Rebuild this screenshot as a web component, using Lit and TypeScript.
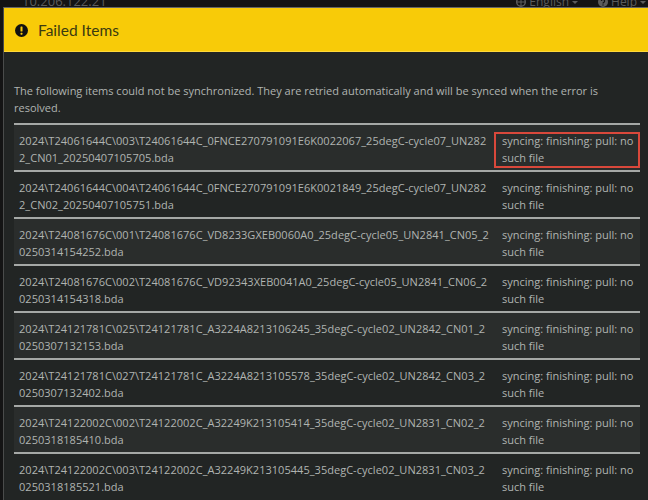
import { LitElement, html, css } from 'lit';
import { customElement } from 'lit/decorators.js';

const ITEMS = [
    '2024\\T24061644C\\003\\T24061644C_0FNCE270791091E6K0022067_25degC-cycle07_UN2822_CN01_20250407105705.bda',
    '2024\\T24061644C\\004\\T24061644C_0FNCE270791091E6K0021849_25degC-cycle07_UN2822_CN02_20250407105751.bda',
    '2024\\T24081676C\\001\\T24081676C_VD8233GXEB0060A0_25degC-cycle05_UN2841_CN05_20250314154252.bda',
    '2024\\T24081676C\\002\\T24081676C_VD92343XEB0041A0_25degC-cycle05_UN2841_CN06_20250314154318.bda',
    '2024\\T24121781C\\025\\T24121781C_A3224A8213106245_35degC-cycle02_UN2842_CN01_20250307132153.bda',
    '2024\\T24121781C\\027\\T24121781C_A3224A8213105578_35degC-cycle02_UN2842_CN03_20250307132402.bda',
    '2024\\T24122002C\\002\\T24122002C_A32249K213105414_35degC-cycle02_UN2831_CN02_20250318185410.bda',
    '2024\\T24122002C\\003\\T24122002C_A32249K213105445_35degC-cycle02_UN2831_CN03_20250318185521.bda',
];

@customElement('app-root')
export class AppRoot extends LitElement {
    static styles = [
        css`
            :host {
                display: block;
                height: 500px;
                overflow: hidden;
                background: #141414;
                font-family: 'Open Sans', 'Noto Sans', sans-serif;
                font-size: 11px;
                line-height: 17px;
                color: #b0b4b1;
            }

            .topbar {
                height: 7px;
                display: flex;
                align-items: flex-start;
                overflow: hidden;
                color: #5c5c5c;
                font-size: 12px;
                padding-left: 22px;
            }

            .topbar span {
                margin-top: -7px;
                display: flex;
                align-items: center;
                gap: 3px;
            }

            .topbar .ip {
                font-size: 13px;
            }

            .topbar .lang {
                margin-left: auto;
            }

            .topbar .help {
                margin-left: 20px;
                padding-right: 2px;
            }

            .caret {
                width: 0;
                height: 0;
                margin-top: 2px;
                border-left: 3px solid transparent;
                border-right: 3px solid transparent;
                border-top: 3px solid #5c5c5c;
            }

            .modal {
                margin-left: 3px;
                height: 493px;
                background: #222524;
                border-top: 1px solid #666;
                border-left: 1px solid #4a4c4b;
                overflow: hidden;
            }

            .header {
                height: 42px;
                padding: 1px 0 0 11px;
                background: #f8cb08;
                border-bottom: 1px solid #ffd83a;
                display: flex;
                align-items: center;
                gap: 10px;
                color: #3b3a10;
                font-family: Lato, sans-serif;
                font-size: 15.5px;
            }

            .body {
                padding: 30px 8px 0 10px;
            }

            p {
                margin: 0 0 7px;
                width: 590px;
            }

            .row {
                position: relative;
                display: grid;
                grid-template-columns: 479px 146px;
                height: 45px;
                border-top: 2px solid #a5a8a6;
            }

            .row:nth-child(odd) {
                background: #2a2d2c;
            }

            .path {
                padding: 7px 3px 0 5px;
                word-break: break-all;
                letter-spacing: 0.03px;
            }

            .error {
                padding: 7px 4px 0 9px;
            }

            .marked {
                position: absolute;
                top: 7px;
                right: 0;
                width: 142px;
                height: 32px;
                border: 2px solid #d9483b;
            }
        `
    ];

    render() {
        return html`
            <div class="topbar">
                <span class="ip">10.206.122.21</span>
                <span class="lang">
                    <svg width="10" height="10" viewBox="0 0 10 10">
                        <circle cx="5" cy="5" r="4.3" fill="none" stroke="#5c5c5c" stroke-width="1.4"></circle>
                        <path d="M1 5h8M5 1v8" stroke="#5c5c5c"></path>
                    </svg>
                    English <i class="caret"></i>
                </span>
                <span class="help">
                    <svg width="10" height="10" viewBox="0 0 10 10">
                        <circle cx="5" cy="5" r="5" fill="#5c5c5c"></circle>
                        <path d="M3.4 4a1.6 1.6 0 1 1 2.4 1.4c-.6.3-.8.6-.8 1.1" fill="none" stroke="#141414" stroke-width="1.2"></path>
                        <rect x="4.4" y="7.4" width="1.2" height="1.2" fill="#141414"></rect>
                    </svg>
                    Help <i class="caret"></i>
                </span>
            </div>
            <div class="modal">
                <div class="header">
                    <svg width="13" height="13" viewBox="0 0 14 14">
                        <circle cx="7" cy="7" r="7" fill="#111"></circle>
                        <rect x="5.9" y="2.6" width="2.2" height="5.6" rx="0.6" fill="#f8cb08"></rect>
                        <rect x="5.9" y="9.3" width="2.2" height="2.2" rx="0.6" fill="#f8cb08"></rect>
                    </svg>
                    <span>Failed Items</span>
                </div>
                <div class="body">
                    <p>The following items could not be synchronized. They are retried automatically and will be synced when the error is resolved.</p>
                    <div>
                        ${ITEMS.map((item, i) => html`
                            <div class="row">
                                <div class="path">${item}</div>
                                <div class="error">syncing: finishing: pull: no such file</div>
                                ${i === 0 ? html`<div class="marked"></div>` : ''}
                            </div>
                        `)}
                    </div>
                </div>
            </div>
        `;
    }
}
